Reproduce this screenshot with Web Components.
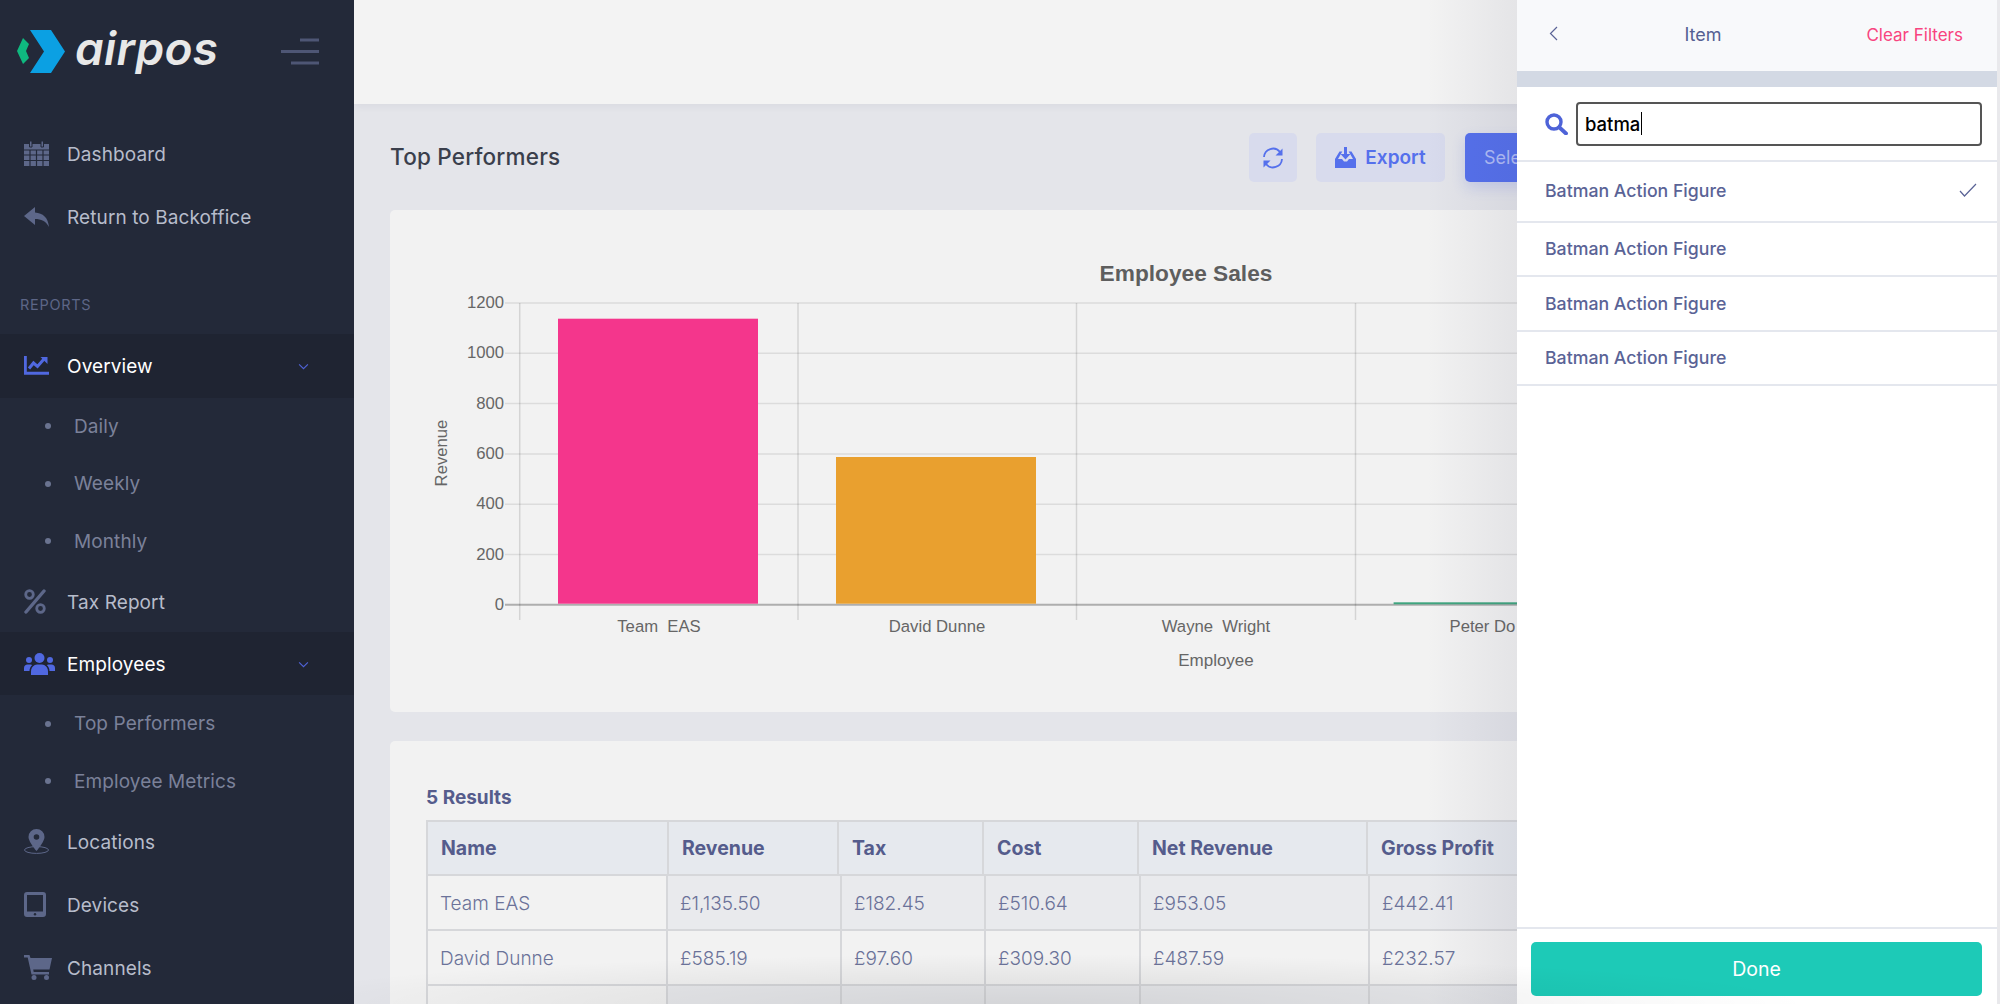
<!DOCTYPE html>
<html>
<head>
<meta charset="utf-8">
<title>airpos</title>
<style>
html, body { margin: 0; height: 100%; overflow: hidden; }
body { font-family: Inter, "Open Sans", "Liberation Sans", sans-serif; }
</style>
</head>
<body>
<app-shell>
  <side-nav slot="side"></side-nav>
  <top-bar slot="main"></top-bar>
  <page-head slot="main" title="Top Performers"></page-head>
  <chart-card slot="main"></chart-card>
  <results-table slot="main"></results-table>
  <filter-drawer slot="drawer"></filter-drawer>
</app-shell>

<script>
const ICONS = {
    calendar: `<svg viewBox="0 0 25 25" width="25" height="25"><path fill="#5d6789" d="M0 3h25v22H0z"/><path fill="#5d6789" stroke="#232939" stroke-width="1" d="M5.500 0h2.500v6H5.500zM17 0h2.500v6H17z"/><path stroke="#232939" stroke-width="1.200" fill="none" d="M0 9h25M0 14h25M0 19.500h25M6 9v16M12.500 9v16M19 9v16"/></svg>`,
    reply: `<svg viewBox="0 0 25 20" width="25" height="20"><path fill="#5d6789" d="M0 9 11 0v5.500c8 .5 13 5 14 14.500-3-6-8-8-14-8v6z"/></svg>`,
    chart: `<svg viewBox="0 0 25 19" width="25" height="19"><path fill="#5068e0" d="M0 0h2.800v15.700H25v3H0z"/><path fill="none" stroke="#5068e0" stroke-width="3" d="M5 12.500 9.500 7l4 3.500L20 3"/><path fill="#5068e0" d="M16.500 1H23.500V8z"/></svg>`,
    percent: `<svg viewBox="0 0 22 25" width="22" height="25"><path stroke="#5d6789" stroke-width="3.400" stroke-linecap="round" d="M20 2 2 23"/><circle cx="5.500" cy="5.500" r="3.800" fill="none" stroke="#5d6789" stroke-width="2.800"/><circle cx="16.500" cy="19.500" r="3.800" fill="none" stroke="#5d6789" stroke-width="2.800"/></svg>`,
    users: `<svg viewBox="0 0 31 22" width="31" height="22"><g fill="#5068e0"><circle cx="15.500" cy="5" r="5"/><circle cx="5" cy="7" r="3"/><circle cx="26" cy="7" r="3"/><path d="M7 22v-3.500c0-4 3-7 6-7h5c3 0 6 3 6 7V22z"/><path d="M0 18v-3c0-2 1.500-3.500 3.500-3.500h3c.7 0 1.200.2 1.700.5C6.500 13.500 5.500 15.500 5.500 18zM31 18v-3c0-2-1.500-3.500-3.500-3.500h-3c-.7 0-1.200.2-1.700.5 1.700 1.500 2.700 3.500 2.700 6z"/></g></svg>`,
    pin: `<svg viewBox="0 0 25 25" width="25" height="25"><path fill="#5d6789" fill-rule="evenodd" d="M12.500 0a8 8 0 0 1 8 8c0 3.500-4.500 10-8 14-3.500-4-8-10.500-8-14a8 8 0 0 1 8-8zm0 5.200a2.800 2.800 0 1 0 0 5.600 2.800 2.800 0 0 0 0-5.600z"/><ellipse cx="12.500" cy="21" rx="12" ry="3.400" fill="none" stroke="#5d6789" stroke-width="1"/></svg>`,
    tablet: `<svg viewBox="0 0 22 25" width="22" height="25"><path fill="#5d6789" fill-rule="evenodd" d="M3 0h16a3 3 0 0 1 3 3v19a3 3 0 0 1-3 3H3a3 3 0 0 1-3-3V3a3 3 0 0 1 3-3zm0 3v16.500h16V3z"/><circle cx="11" cy="22.200" r="1.200" fill="#232939"/></svg>`,
    cart: `<svg viewBox="0 0 28 25" width="28" height="25"><g fill="#5d6789"><path d="M0 0h5.500l1 3H28l-2.500 11.500H9.200l.5 2.500H25v2.500H7.500L3.700 2.500H0z"/><circle cx="10" cy="22.500" r="2.500"/><circle cx="22.500" cy="22.500" r="2.500"/></g></svg>`,
    chevron: `<svg viewBox="0 0 12 8" width="11" height="7"><path d="M1 1.500 6 6.500l5-5" fill="none" stroke="#4f62d6" stroke-width="1.300"/></svg>`,
    refresh: `<svg viewBox="0 0 22 22" width="22" height="22"><g fill="none" stroke="#5570ec" stroke-width="1.800"><path d="M2 10a9 9 0 0 1 16-5l1.500 2"/><path d="M20 12a9 9 0 0 1-16 5l-1.500-2"/></g><path fill="#5570ec" d="M20.500 1.500v7h-7zM1.500 20.500v-7h7z"/></svg>`,
    download: `<svg viewBox="0 0 21 21" width="21" height="21"><g fill="#5570ec"><path d="M9 0h3v7h3.500l-5 5.500-5-5.500H9z"/><path d="M4.500 4.500h2.800L3 12h4l2 2.500h3L14 12h4l-4.300-7.500h2.800L21 12v9H0v-9z"/></g></svg>`,
    search: `<svg viewBox="0 0 23 22" width="23" height="22"><circle cx="9" cy="9" r="7" fill="none" stroke="#4e63d8" stroke-width="3.400"/><path d="m14.500 14.500 6.500 6" stroke="#4e63d8" stroke-width="3.800" stroke-linecap="round"/></svg>`,
    back: `<svg viewBox="0 0 9 15" width="9" height="15"><path d="M8 1 1.500 7.500 8 14" fill="none" stroke="#5a6396" stroke-width="1.200"/></svg>`,
    check: `<svg viewBox="0 0 18 14" width="18" height="14"><path d="m1 8 4.500 5L17 1" fill="none" stroke="#5a6396" stroke-width="1.200"/></svg>`
}

class AppShell extends HTMLElement {
    constructor() {
        super()
        this.root = this.attachShadow({ mode: "open" })
        this.root.innerHTML = `
            <style>
            :host { display: block; position: relative; width: 2000px; height: 1004px; overflow: hidden; background: #e4e5ea; }
            .layout { display: flex; height: 100%; }
            .side { flex: 0 0 354px; }
            .main { flex: 1; min-width: 0; height: 100%; overflow: hidden; }
            .fade { position: absolute; left: 0; top: 0; right: 3px; bottom: 0; pointer-events: none;
                background: linear-gradient(to left, rgba(60,60,90,.08), rgba(60,60,90,0) 90px) no-repeat 0 0 / 1517px 100%; }
            .drawer { position: absolute; top: 0; bottom: 0; right: 3px; width: 480px; }
            .strip { position: absolute; top: 0; bottom: 0; right: 0; width: 3px; background: #e9e9ec; }
            .vignette { position: absolute; left: 0; right: 0; bottom: 0; height: 50px; pointer-events: none;
                background: radial-gradient(ellipse 780px 50px at 1030px 100%, rgba(0,0,0,.09), rgba(0,0,0,.05) 50%, rgba(0,0,0,0)); }
            </style>
            <div class="layout">
                <div class="side"><slot name="side"></slot></div>
                <div class="main"><slot name="main"></slot></div>
            </div>
            <div class="fade"></div>
            <div class="drawer"><slot name="drawer"></slot></div>
            <div class="strip"></div>
            <div class="vignette"></div>
        `
    }
}

class NavItem extends HTMLElement {
    constructor() {
        super()
        this.root = this.attachShadow({ mode: "open" })
    }

    connectedCallback() {
        const icon = this.getAttribute("icon")
        const active = this.hasAttribute("active")
        this.root.innerHTML = `
            <style>
            :host { display: flex; align-items: center; height: var(--h, 63px); padding-left: 24px; box-sizing: border-box;
                position: relative; color: ${active ? "#fff" : "#b7bccb"}; ${active ? "background: #1f2432;" : ""} }
            .ico { width: 43px; display: flex; }
            .txt { font-size: 19px; font-weight: 400; letter-spacing: .1px; padding-top: 2px; }
            .chev { position: absolute; left: 298px; top: 50%; margin-top: -3px; display: flex; }
            </style>
            <span class="ico">${ICONS[icon]}</span>
            <span class="txt"><slot></slot></span>
            ${active ? `<span class="chev">${ICONS.chevron}</span>` : ""}
        `
    }
}

class NavSub extends HTMLElement {
    constructor() {
        super()
        this.root = this.attachShadow({ mode: "open" })
        this.root.innerHTML = `
            <style>
            :host { display: flex; align-items: center; height: 57.500px; padding-left: 45px; color: #7b8199; }
            i { width: 6px; height: 6px; border-radius: 50%; background: #6a7390; margin-right: 23px; }
            span { font-size: 19px; letter-spacing: .1px; }
            </style>
            <i></i><span><slot></slot></span>
        `
    }
}

class SideNav extends HTMLElement {
    constructor() {
        super()
        this.root = this.attachShadow({ mode: "open" })
        this.root.innerHTML = `
            <style>
            :host { display: block; height: 1004px; background: #232939; overflow: hidden; }
            .brand { display: flex; align-items: center; height: 102px; padding-left: 17px; position: relative; }
            .word { font-size: 46px; font-weight: 600; font-style: italic; color: #e8e8e8; margin-left: 10px; letter-spacing: .3px; line-height: 1; margin-top: -6px; }
            .burger { position: absolute; left: 281px; top: 38px; }
            .top { padding-top: 20px; }
            .label { font-size: 14.500px; color: #5d6687; letter-spacing: .7px; padding: 48px 0 0 20px; height: 37.500px; }
            </style>
            <div class="brand">
                <svg width="48" height="44" viewBox="0 0 48 44" style="margin-top:1px">
                    <path fill="#0fb87f" d="M6 8 0 21l6 13 6-6-3-7 3-7z"/>
                    <path fill="#0ba0e3" d="M13 0h21l14 21.500L34 43H13l14-21.500z"/>
                </svg>
                <span class="word">airpos</span>
                <svg class="burger" width="38" height="27" viewBox="0 0 38 27">
                    <path stroke="#4e5675" stroke-width="3" d="M19 2h19M0 13.500h38M10 25h28"/>
                </svg>
            </div>
            <div class="top">
                <nav-item icon="calendar">Dashboard</nav-item>
                <nav-item icon="reply">Return to Backoffice</nav-item>
            </div>
            <div class="label">REPORTS</div>
            <nav-item icon="chart" active style="--h:64px">Overview</nav-item>
            <nav-sub>Daily</nav-sub>
            <nav-sub>Weekly</nav-sub>
            <nav-sub>Monthly</nav-sub>
            <nav-item icon="percent" style="--h:62px">Tax Report</nav-item>
            <nav-item icon="users" active style="--h:63px">Employees</nav-item>
            <nav-sub>Top Performers</nav-sub>
            <nav-sub>Employee Metrics</nav-sub>
            <nav-item icon="pin">Locations</nav-item>
            <nav-item icon="tablet">Devices</nav-item>
            <nav-item icon="cart">Channels</nav-item>
        `
    }
}

class TopBar extends HTMLElement {
    constructor() {
        super()
        this.root = this.attachShadow({ mode: "open" })
        this.root.innerHTML = `<style>:host { display: block; height: 104px; background: #f3f3f3; box-shadow: 0 2px 8px rgba(40,40,70,.06); }</style>`
    }
}

class PageHead extends HTMLElement {
    constructor() {
        super()
        this.root = this.attachShadow({ mode: "open" })
        this.root.innerHTML = `
            <style>
            :host { display: flex; align-items: center; height: 49px; margin-top: 29px; padding-left: 36px; }
            h1 { margin: -2px 0 0; font-size: 22.500px; font-weight: 500; color: #3a3f4c; flex: 0 0 859px; letter-spacing: .2px; }
            .btn { display: flex; align-items: center; justify-content: center; gap: 9px; height: 49px; border-radius: 5px; background: #d8dbed; color: #5570ec; font-size: 19px; font-weight: 600; box-sizing: border-box; }
            .ref { width: 48px; margin-right: 19px; }
            .exp { width: 129px; margin-right: 20px; }
            .sel { background: #5570ec; color: #b0bcf7; font-size: 18px; font-weight: 400; width: 120px; justify-content: flex-start; padding-left: 19px; box-shadow: 0 6px 14px rgba(85,112,236,.2); }
            </style>
            <h1></h1>
            <div class="btn ref">${ICONS.refresh}</div>
            <div class="btn exp">${ICONS.download}<span>Export</span></div>
            <div class="btn sel">Sele</div>
        `
    }

    connectedCallback() {
        this.root.querySelector("h1").textContent = this.getAttribute("title")
    }
}

class ChartCard extends HTMLElement {
    constructor() {
        super()
        this.root = this.attachShadow({ mode: "open" })
        const ticks = [1200, 1000, 800, 600, 400, 200, 0]
        const grid = ticks.map((t, i) => {
            const y = 93 + i * 50.300
            return `<line x1="115" y1="${y}" x2="1200" y2="${y}" stroke="#000" stroke-opacity="${t === 0 ? .28 : .09}" stroke-width="${t === 0 ? 2 : 1.500}"/>
                <text x="114" y="${y + 5}" text-anchor="end">${t}</text>`
        }).join("")
        const verts = [129.700, 408, 686.500, 965.500].map(x => `<line x1="${x}" y1="93" x2="${x}" y2="410" stroke="#000" stroke-opacity=".12" stroke-width="1.500"/>`).join("")
        this.root.innerHTML = `
            <style>
            :host { display: block; width: 1450px; height: 502px; margin: 28px 0 0 36px; background: #f2f2f2; border-radius: 5px; }
            svg { display: block; font-family: "Liberation Sans", Arial, sans-serif; font-size: 16.700px; fill: #666; }
            </style>
            <svg width="1127" height="502" viewBox="390 0 1127 502" style="overflow:hidden">
                <g transform="translate(390 0)">
                    <text x="796" y="71" text-anchor="middle" style="font-size:22.700px;font-weight:700;fill:#5e5e5e">Employee Sales</text>
                    ${grid}
                    ${verts}
                    <rect x="168" y="108.700" width="200" height="285" fill="#f4368c"/>
                    <rect x="446" y="247" width="200" height="146.700" fill="#e9a02f"/>
                    <rect x="1003.600" y="392.300" width="200" height="2" fill="#3fa57f"/>
                    <text x="269" y="422" text-anchor="middle">Team&#160;&#160;EAS</text>
                    <text x="547" y="422" text-anchor="middle">David Dunne</text>
                    <text x="826" y="422" text-anchor="middle">Wayne&#160;&#160;Wright</text>
                    <text x="1059.500" y="422">Peter Do</text>
                    <text x="826" y="456" text-anchor="middle" style="font-size:17px">Employee</text>
                    <text transform="translate(57 243) rotate(-90)" text-anchor="middle">Revenue</text>
                </g>
            </svg>
        `
    }
}

class ResultsTable extends HTMLElement {
    constructor() {
        super()
        this.root = this.attachShadow({ mode: "open" })
        const rows = [
            ["Team EAS", "£1,135.50", "£182.45", "£510.64", "£953.05", "£442.41"],
            ["David Dunne", "£585.19", "£97.60", "£309.30", "£487.59", "£232.57"],
            ["", "", "", "", "", ""]
        ]
        const head = ["Name", "Revenue", "Tax", "Cost", "Net Revenue", "Gross Profit"].map(h => `<div>${h}</div>`).join("")
        const body = rows.map((r, i) => `<div class="row ${i % 2 === 0 ? "odd" : ""}">${r.map(c => `<div>${c}</div>`).join("")}</div>`).join("")
        this.root.innerHTML = `
            <style>
            :host { display: block; width: 1450px; height: 400px; margin: 29px 0 0 36px; background: #f2f2f2; border-radius: 5px 5px 0 0; padding: 42px 0 0 36px; box-sizing: border-box; }
            .count { font-size: 19px; font-weight: 700; color: #555c8c; height: 37px; line-height: 30px; }
            .table { width: 1200px; border-top: 2px solid #d6d7da; }
            .head, .row { display: grid; box-sizing: border-box; }
            .head { grid-template-columns: 241px 170px 145px 155px 229px 259px; height: 54px; background: #e6e9ee; font-weight: 700; font-size: 19.500px; color: #555c8c; border-bottom: 2px solid #d6d7da; }
            .head div { display: flex; align-items: center; padding-left: 13px; border-left: 2px solid #d6d7da; box-sizing: border-box; }
            .row { grid-template-columns: 240px 174px 144px 155px 229px 258px; height: 55px; font-weight: 300; font-size: 19px; color: #6b7299; border-bottom: 2px solid #d6d7da; }
            .row div { display: flex; align-items: center; padding: 2px 0 0 12px; border-left: 2px solid #d6d7da; box-sizing: border-box; }
            .odd div:not(:first-child) { background: #e9eaed; }
            </style>
            <div class="count">5 Results</div>
            <div class="table">
                <div class="head">${head}</div>
                ${body}
            </div>
        `
    }
}

class DrawerItem extends HTMLElement {
    constructor() {
        super()
        this.root = this.attachShadow({ mode: "open" })
    }

    connectedCallback() {
        this.root.innerHTML = `
            <style>
            :host { display: flex; align-items: center; justify-content: space-between; height: 54.500px; box-sizing: border-box; padding: 0 20px 0 28px; border-bottom: 2px solid #e4e7ee; color: #5a6396; font-size: 17.700px; font-weight: 500; }
            :host([checked]) { height: 60.500px; padding-bottom: 2px; }
            </style>
            <span><slot></slot></span>
            ${this.hasAttribute("checked") ? ICONS.check : ""}
        `
    }
}

class FilterDrawer extends HTMLElement {
    constructor() {
        super()
        this.root = this.attachShadow({ mode: "open" })
        this.root.innerHTML = `
            <style>
            :host { display: flex; flex-direction: column; height: 1004px; background: #fff; position: relative; }
            .top { display: grid; grid-template-columns: 114px 80px 1fr; align-items: center; height: 71px; background: #f8f9fb; padding: 0 34px 0 32px; box-sizing: border-box; flex: none; }
            .top > div { margin-top: -2px; }
            .ttl { text-align: center; font-size: 18px; color: #555f92; }
            .clear { text-align: right; font-size: 17px; color: #f8447f; white-space: nowrap; }
            .band { height: 16px; background: #d3d9e4; flex: none; }
            .search { display: flex; align-items: center; height: 73px; padding: 0 15px 0 28px; border-bottom: 2px solid #e4e7ee; flex: none; }
            .box { flex: 1; height: 44px; margin-left: 8px; border: 2px solid #555; border-radius: 4px; box-sizing: border-box; display: flex; align-items: center; padding-left: 7px; font-size: 18.500px; font-weight: 500; color: #000; }
            .caret { width: 1px; height: 23px; background: #000; margin-left: 1px; }
            .list { flex: 1; }
            .foot { flex: none; height: 77px; border-top: 2px solid #e4e7ee; box-sizing: border-box; padding: 13px 15px 0 14px; }
            .done { height: 54px; border-radius: 5px; background: #1dcab7; color: #fff; font-size: 19.500px; display: flex; align-items: center; justify-content: center; }
            </style>
            <div class="top">
                <div>${ICONS.back}</div>
                <div class="ttl">Item</div>
                <div class="clear">Clear Filters</div>
            </div>
            <div class="band"></div>
            <div class="search">
                ${ICONS.search}
                <div class="box"><span>batma</span><span class="caret"></span></div>
            </div>
            <div class="list">
                <drawer-item checked>Batman Action Figure</drawer-item>
                <drawer-item>Batman Action Figure</drawer-item>
                <drawer-item>Batman Action Figure</drawer-item>
                <drawer-item>Batman Action Figure</drawer-item>
            </div>
            <div class="foot"><div class="done">Done</div></div>
        `
    }
}

customElements.define("app-shell", AppShell)
customElements.define("nav-item", NavItem)
customElements.define("nav-sub", NavSub)
customElements.define("side-nav", SideNav)
customElements.define("top-bar", TopBar)
customElements.define("page-head", PageHead)
customElements.define("chart-card", ChartCard)
customElements.define("results-table", ResultsTable)
customElements.define("drawer-item", DrawerItem)
customElements.define("filter-drawer", FilterDrawer)
</script>
</body>
</html>
